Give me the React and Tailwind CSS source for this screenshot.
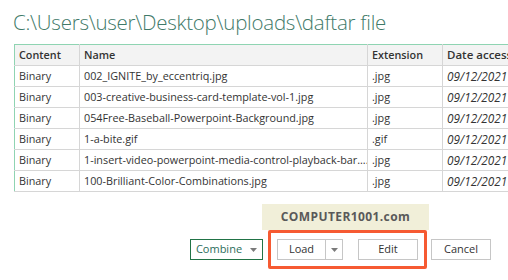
const rows = [
  { name: '002_IGNITE_by_eccentriq.jpg', ext: '.jpg' },
  { name: '003-creative-business-card-template-vol-1.jpg', ext: '.jpg' },
  { name: '054Free-Baseball-Powerpoint-Background.jpg', ext: '.jpg' },
  { name: '1-a-bite.gif', ext: '.gif' },
  { name: '1-insert-video-powerpoint-media-control-playback-bar....', ext: '.jpg' },
  { name: '100-Brilliant-Color-Combinations.jpg', ext: '.jpg' },
]

function Caret() {
  return (
    <svg width="7" height="4" viewBox="0 0 7 4" className="fill-[#7a7a7a]">
      <path d="M0 0h7L3.5 4z" />
    </svg>
  )
}

export default function App() {
  return (
    <div className="h-[280px] w-[508px] overflow-hidden bg-white font-['Open_Sans',sans-serif] text-[#333]">
      <h1 className="pl-[13px] pt-[8px] text-[20.5px] font-light leading-[28px] tracking-[-0.25px] text-[#3f7a69]">
        C:\Users\user\Desktop\uploads\daftar file
      </h1>

      <div className="ml-[14px] mt-[8px] w-[494px] overflow-hidden">
        <table className="w-[560px] table-fixed border-collapse text-[10.8px] leading-[20px]">
          <colgroup>
            <col className="w-[65px]" />
            <col className="w-[288px]" />
            <col className="w-[75px]" />
            <col className="w-[132px]" />
          </colgroup>
          <thead>
            <tr className="border-l border-t border-[#8fd4b2] bg-[#f3f3f3]">
              <th className="border-b border-r border-[#d6d6d6] px-[4px] text-left font-semibold">Content</th>
              <th className="border-b border-r border-[#d6d6d6] px-[4px] text-left font-semibold">Name</th>
              <th className="border-b border-r border-[#d6d6d6] px-[4px] text-left font-semibold">Extension</th>
              <th className="whitespace-nowrap border-b border-[#d6d6d6] px-[4px] text-left text-[11.5px] font-semibold">Date accessed</th>
            </tr>
          </thead>
          <tbody>
            {rows.map((row) => (
              <tr className="border-l border-[#8fd4b2]" key={row.name}>
                <td className="border-b border-r border-[#d6d6d6] px-[4px]">Binary</td>
                <td className="overflow-hidden whitespace-nowrap border-b border-r border-[#d6d6d6] px-[4px]">{row.name}</td>
                <td className="border-b border-r border-[#d6d6d6] px-[4px]">{row.ext}</td>
                <td className="whitespace-nowrap border-b border-[#d6d6d6] px-[4px] text-[11.8px] italic">09/12/2021 10:21:45</td>
              </tr>
            ))}
          </tbody>
        </table>
      </div>

      <div className="ml-[262px] mt-[12px] flex h-[26px] w-[167px] items-center justify-center bg-[#f1efd9] text-[12px] font-bold tracking-[0.4px] text-[#595959]">
        COMPUTER1001.com
      </div>

      <div className="flex h-[39px] items-center pl-[190px] text-[11px]">
        <button className="flex h-[21px] w-[73px] items-center justify-center gap-[8px] border border-[#217346] text-[#2b6e5b]">
          Combine
          <Caret />
        </button>

        <div className="ml-[5px] flex h-[39px] w-[159px] items-center rounded-[2px] border-[3px] border-[#f65a32] pl-[6px]">
          <div className="flex h-[21px] w-[66px] border border-[#c6c6c6]">
            <span className="flex w-[48px] items-center justify-center border-r border-[#c6c6c6]">Load</span>
            <span className="flex flex-1 items-center justify-center">
              <Caret />
            </span>
          </div>
          <button className="ml-[15px] flex h-[21px] w-[60px] items-center justify-center border border-[#c6c6c6]">
            Edit
          </button>
        </div>

        <button className="ml-[4px] flex h-[21px] w-[60px] items-center justify-center border border-[#c6c6c6]">
          Cancel
        </button>
      </div>
    </div>
  )
}
